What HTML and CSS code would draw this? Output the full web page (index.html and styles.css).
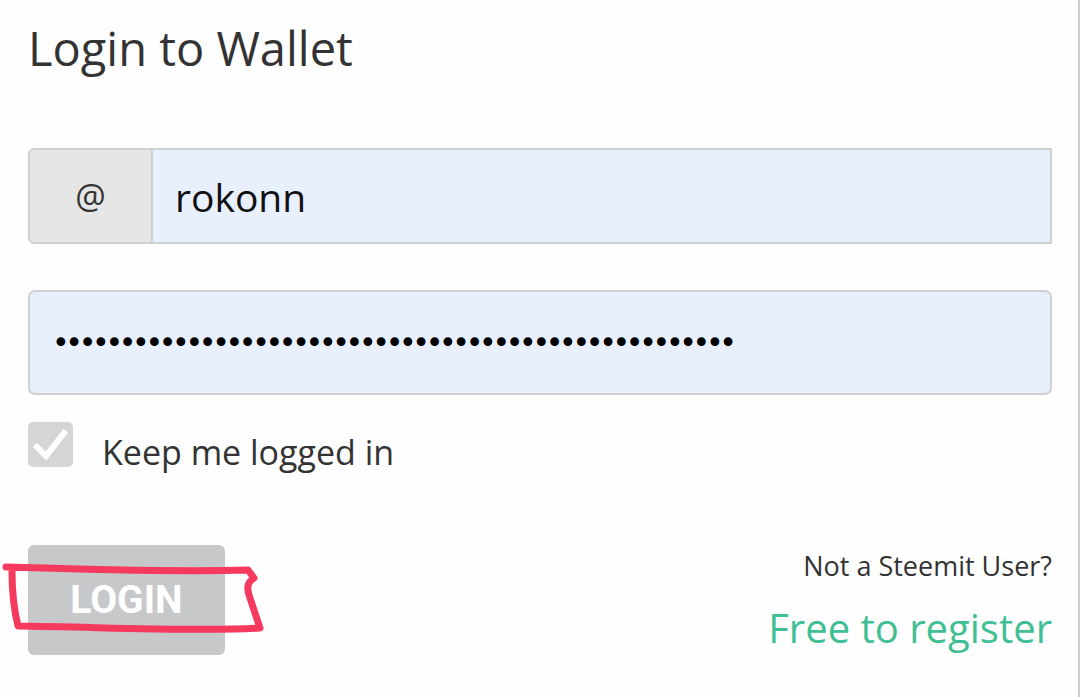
FILE: index.html
```html
<!DOCTYPE html>
<html lang="en">

<head>
    <meta charset="UTF-8">
    <meta name="viewport" content="width=device-width, initial-scale=1.0">
    <title>Login to Wallet</title>
    <link rel="stylesheet" href="styles.css">
</head>

<body>
    <div class="page">
        <h1 class="title">Login to Wallet</h1>
        <form class="login-form" onsubmit="return false">
            <div class="input-group">
                <span class="addon">@</span>
                <input class="field" type="text" value="rokonn" autocomplete="username">
            </div>
            <input class="field password" type="password" value="aaaaaaaaaaaaaaaaaaaaaaaaaaaaaaaaaaaaaaaaaaaaaaaaaaa" autocomplete="current-password">
            <label class="remember">
                <span class="checkbox">
                    <svg width="45" height="45" viewBox="0 0 45 45">
                        <polyline points="9,25 18,34 36,11" fill="none" stroke="#fff" stroke-width="6" stroke-linecap="square"/>
                    </svg>
                </span>
                <span class="remember-text">Keep me logged in</span>
            </label>
            <div class="actions">
                <div class="login-wrap">
                    <button class="login-btn" type="submit" disabled>LOGIN</button>
                    <svg class="scribble" width="270" height="80" viewBox="0 0 270 80">
                        <path d="M6,9 C70,11 180,14 248,12 L254,20 C246,25 247,32 250,40 L260,70 C200,74 100,69 18,68 C14,52 12,32 12,13" fill="none" stroke="#f63a5e" stroke-width="7" stroke-linecap="round" stroke-linejoin="round"/>
                    </svg>
                </div>
                <div class="register">
                    <span class="register-hint">Not a Steemit User?</span>
                    <a class="register-link" href="#">Free to register</a>
                </div>
            </div>
        </form>
    </div>
</body>

</html>
```

FILE: styles.css
```css
body {
    margin: 0;
    background-color: #fefefe;
    font-family: "Open Sans", "Noto Sans", sans-serif;
    color: #333;
}

.page {
    box-sizing: border-box;
    width: 1080px;
    height: 697px;
    padding: 0 26px 0 28px;
    border-right: 2px solid #cccccc;
    overflow: hidden;
}

.title {
    margin: 0;
    padding-top: 13px;
    font-size: 47px;
    font-weight: 400;
    line-height: 70px;
    color: #333;
}

.login-form {
    display: flex;
    flex-direction: column;
    margin-top: 65px;
}

.input-group {
    display: flex;
    height: 96px;
    box-sizing: border-box;
    border: 2px solid #d0d0d0;
    border-radius: 6px 0 0 6px;
    overflow: hidden;
}

.addon {
    width: 121px;
    flex: none;
    display: flex;
    align-items: center;
    justify-content: center;
    background-color: #e6e6e6;
    border-right: 2px solid #d0d0d0;
    font-size: 34px;
    color: #333;
}

.field {
    flex: 1;
    min-width: 0;
    border: none;
    outline: none;
    background-color: #e8f0fe;
    padding: 0 0 0 22px;
    font-family: "Open Sans", "Noto Sans", sans-serif;
    font-size: 39px;
    color: #111;
}

.password {
    flex: none;
    box-sizing: border-box;
    height: 105px;
    margin-top: 46px;
    border: 2px solid #d0d0d0;
    border-radius: 7px;
    padding-left: 22px;
    font-family: "DejaVu Sans", sans-serif;
    font-size: 30px;
    letter-spacing: -4.35px;
    color: #000;
}

.remember {
    display: flex;
    align-items: flex-start;
    gap: 29px;
    margin-top: 27px;
    font-size: 34px;
    color: #333;
}

.remember-text {
    margin-top: 8px;
    line-height: 45px;
}

.checkbox {
    width: 45px;
    height: 45px;
    border-radius: 5px;
    background-color: #d5d5d5;
    display: flex;
}

.actions {
    display: flex;
    justify-content: space-between;
    margin-top: 70px;
}

.login-wrap {
    position: relative;
}

.login-btn {
    width: 197px;
    height: 110px;
    border: none;
    border-radius: 6px;
    background-color: #c7c8ca;
    color: #fff;
    font-family: Roboto, "Liberation Sans", sans-serif;
    font-weight: 700;
    font-size: 39px;
    padding: 0;
}

.scribble {
    position: absolute;
    left: -28px;
    top: 13px;
}

.register {
    display: flex;
    flex-direction: column;
    align-items: flex-end;
}

.register-hint {
    margin-top: 2px;
    font-size: 27px;
    line-height: 38px;
    color: #333;
}

.register-link {
    margin-top: 15px;
    font-size: 40px;
    line-height: 56px;
    color: #3fbf93;
    text-decoration: none;
}
```
